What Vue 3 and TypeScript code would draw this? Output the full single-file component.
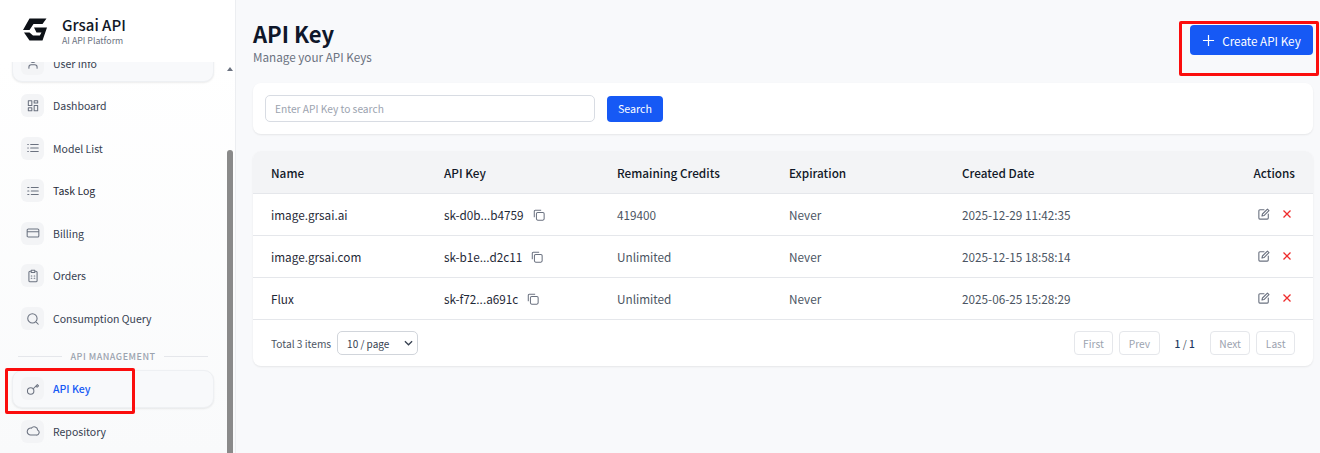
<template>
  <div class="page">
    <aside class="sidebar">
      <div class="brand">
        <svg class="logo" viewBox="0 0 24 23" width="24" height="23">
          <path d="M6.5 0.5H23.5L19.500 6H10.500L6.500 12H0Z" fill="#0d1117" />
          <path d="M11 9.500H24L19.500 22.500H6.500L1 14.500H6.500L10 17.500H16.800L18.500 14.500H13.500Z" fill="#0d1117" />
        </svg>
        <div>
          <div class="brand-name">Grsai API</div>
          <div class="brand-sub">AI API Platform</div>
        </div>
      </div>
      <div class="nav-wrap">
        <nav class="nav">
          <template v-for="item in navItems" :key="item.label">
            <div v-if="item.section" class="section"><span>{{ item.section }}</span></div>
            <div class="nav-item" :class="{ card: item.card, active: item.active, strong: item.strong }">
              <span class="nav-icon">
                <svg viewBox="0 0 24 24" width="14" height="14" fill="none" stroke="currentColor" stroke-width="1.8"
                  stroke-linecap="round" stroke-linejoin="round">
                  <path :d="item.icon" />
                </svg>
              </span>
              <span>{{ item.label }}</span>
            </div>
          </template>
        </nav>
        <div class="scrollbar">
          <span class="arrow"></span>
          <span class="thumb"></span>
        </div>
      </div>
    </aside>

    <main class="main">
      <header class="head">
        <div>
          <h1>API Key</h1>
          <p>Manage your API Keys</p>
        </div>
        <button class="create">
          <svg viewBox="0 0 14 14" width="13" height="13" fill="none" stroke="#fff" stroke-width="1.3">
            <path d="M7 1v12M1 7h12" />
          </svg>
          Create API Key
        </button>
      </header>

      <section class="search card-box">
        <input class="search-input" placeholder="Enter API Key to search" />
        <button class="search-btn">Search</button>
      </section>

      <section class="table-box card-box">
        <table>
          <colgroup>
            <col style="width: 173px" />
            <col style="width: 173px" />
            <col style="width: 172px" />
            <col style="width: 173px" />
            <col />
            <col style="width: 120px" />
          </colgroup>
          <thead>
            <tr>
              <th>Name</th>
              <th>API Key</th>
              <th>Remaining Credits</th>
              <th>Expiration</th>
              <th>Created Date</th>
              <th class="right">Actions</th>
            </tr>
          </thead>
          <tbody>
            <tr v-for="row in rows" :key="row.name">
              <td class="name">{{ row.name }}</td>
              <td class="name">
                <span class="key">
                  {{ row.key }}
                  <svg viewBox="0 0 14 14" width="12" height="12" fill="none" stroke="#6b7280" stroke-width="1.2">
                    <rect x="4" y="4" width="9" height="9" rx="1.5" />
                    <path d="M1.5 9.5V2.5a1 1 0 0 1 1-1h7" />
                  </svg>
                </span>
              </td>
              <td>{{ row.credits }}</td>
              <td>Never</td>
              <td>{{ row.created }}</td>
              <td>
                <div class="actions">
                  <svg viewBox="0 0 14 14" width="12" height="12" fill="none" stroke="#6b7280" stroke-width="1.3"
                    stroke-linecap="round" stroke-linejoin="round">
                    <path d="M7 2H2.2A1.2 1.2 0 0 0 1 3.2v8.6A1.2 1.2 0 0 0 2.2 13h8.6a1.2 1.2 0 0 0 1.2-1.2V7" />
                    <path d="M11 1.2l1.8 1.8L7 8.8l-2.4.6.6-2.4z" />
                  </svg>
                  <svg viewBox="0 0 10 10" width="10" height="10" fill="none" stroke="#ef2b2b" stroke-width="1.3">
                    <path d="M1.5 1.5l7 7M8.5 1.5l-7 7" />
                  </svg>
                </div>
              </td>
            </tr>
          </tbody>
        </table>
        <footer class="pager">
          <div class="total">
            <span>Total 3 items</span>
            <div class="size">
              <span>10 / page</span>
              <svg viewBox="0 0 10 6" width="9" height="6" fill="none" stroke="#374151" stroke-width="1.4">
                <path d="M1 1l4 4 4-4" />
              </svg>
            </div>
          </div>
          <div class="pages">
            <span class="pg">First</span>
            <span class="pg">Prev</span>
            <span class="cur"><b>1</b> / <b>1</b></span>
            <span class="pg">Next</span>
            <span class="pg">Last</span>
          </div>
        </footer>
      </section>
    </main>

    <div class="mark mark-nav"></div>
    <div class="mark mark-create"></div>
  </div>
</template>

<script setup lang="ts">
interface NavItem {
  label: string;
  icon: string;
  card?: boolean;
  active?: boolean;
  strong?: boolean;
  section?: string;
}

const navItems: NavItem[] = [
  { label: 'User Info', card: true, icon: 'M19 21v-2a4 4 0 0 0-4-4H9a4 4 0 0 0-4 4v2M12 11a4 4 0 1 0 0-8 4 4 0 0 0 0 8z' },
  { label: 'Dashboard', icon: 'M4 3h6v8H4zM14 3h6v4h-6zM14 11h6v9h-6zM4 15h6v5H4z' },
  { label: 'Model List', icon: 'M8 6h13M8 12h13M8 18h13M3 6h1M3 12h1M3 18h1' },
  { label: 'Task Log', strong: true, icon: 'M9 6h12M9 12h12M9 18h12M3 6h2M3 12h2M3 18h2' },
  { label: 'Billing', icon: 'M4 5h16a2 2 0 0 1 2 2v10a2 2 0 0 1-2 2H4a2 2 0 0 1-2-2V7a2 2 0 0 1 2-2zM2 10h20' },
  { label: 'Orders', icon: 'M9 4H7a2 2 0 0 0-2 2v14a2 2 0 0 0 2 2h10a2 2 0 0 0 2-2V6a2 2 0 0 0-2-2h-2M9 2h6v4H9zM9 12h1M14 12h1M9 16h1M14 16h1' },
  { label: 'Consumption Query', icon: 'M11 19a8 8 0 1 0 0-16 8 8 0 0 0 0 16zM21 21l-4.3-4.3' },
  { label: 'API Key', card: true, active: true, section: 'API MANAGEMENT', icon: 'M8 21a5.5 5.5 0 1 0 0-11 5.5 5.5 0 0 0 0 11zM12 12l5-5M17 7l2.5-2.5 2 2-2.5 2.500z' },
  { label: 'Repository', icon: 'M17.5 19H8a6 6 0 1 1 1.2-11.9A6 6 0 0 1 20 10.5 4.5 4.5 0 0 1 17.5 19z' },
];

const rows = [
  { name: 'image.grsai.ai', key: 'sk-d0b...b4759', credits: '419400', created: '2025-12-29 11:42:35' },
  { name: 'image.grsai.com', key: 'sk-b1e...d2c11', credits: 'Unlimited', created: '2025-12-15 18:58:14' },
  { name: 'Flux', key: 'sk-f72...a691c', credits: 'Unlimited', created: '2025-06-25 15:28:29' },
];
</script>

<style>
html,
body {
  margin: 0;
  height: 100%;
  overflow: hidden;
}
</style>

<style scoped>
.page {
  position: relative;
  display: flex;
  width: 1320px;
  height: 453px;
  overflow: hidden;
  background: #f8f9fb;
  font-family: "Noto Sans CJK SC", "Noto Sans", sans-serif;
  color: #111827;
}

/* sidebar */
.sidebar {
  width: 236px;
  flex: none;
  display: flex;
  flex-direction: column;
  background: #fff;
  border-right: 1px solid #eceef1;
  box-sizing: border-box;
}

.brand {
  height: 62px;
  flex: none;
  display: flex;
  align-items: center;
  gap: 15px;
  padding-left: 23px;
  background: #fff;
}

.logo {
  margin-bottom: 3px;
}

.brand-name {
  font-size: 15px;
  line-height: 18px;
  font-weight: 500;
  color: #111827;
  margin-top: 2px;
}

.brand-sub {
  font-size: 8.8px;
  line-height: 14px;
  color: #6b7280;
}

.nav-wrap {
  flex: 1;
  display: flex;
  min-height: 0;
  overflow: hidden;
  background: linear-gradient(#fff, #f9fafb);
}

.nav {
  flex: 1;
  margin-top: -18px;
  padding: 0 12px;
  min-width: 0;
}

.nav-item {
  height: 38px;
  margin-bottom: 4.6px;
  display: flex;
  align-items: center;
  gap: 9px;
  padding-left: 8px;
  font-size: 10.5px;
  color: #374151;
  border-radius: 10px;
  box-sizing: border-box;
  border: 1px solid transparent;
}

.nav-item.strong {
  color: #1f2937;
}

.nav-item.card {
  background: #f8f9fb;
  border-color: #eef0f3;
  box-shadow: 0 1px 2px rgba(0, 0, 0, 0.08);
}

.nav-item.active {
  color: #1659f5;
  font-weight: 500;
}

.nav-icon {
  width: 23px;
  height: 23px;
  flex: none;
  display: flex;
  align-items: center;
  justify-content: center;
  border-radius: 6px;
  background: #f3f4f6;
  color: #6b7280;
}

.section {
  height: 20px;
  margin: 9px 6px 3px 6px;
  display: flex;
  align-items: center;
  gap: 8px;
  font-size: 9px;
  font-weight: 500;
  letter-spacing: 0.5px;
  color: #9ca3af;
}

.section::before,
.section::after {
  content: "";
  flex: 1;
  height: 1px;
  background: #e5e7eb;
}

.scrollbar {
  width: 9px;
  flex: none;
}

.arrow {
  display: block;
  width: 0;
  margin: 5px 0 0 1px;
  border: 3px solid transparent;
  border-top: 0;
  border-bottom: 4px solid #6b7280;
}

.thumb {
  display: block;
  margin: 79px 0 0 1px;
  width: 6px;
  height: 320px;
  border-radius: 3px;
  background: #8a8a8a;
}

/* main */
.main {
  flex: 1;
  min-width: 0;
  padding: 0 7px 0 17px;
}

.head {
  height: 83px;
  display: flex;
  justify-content: space-between;
  align-items: flex-start;
}

h1 {
  margin: 17px 0 0;
  font-size: 22px;
  line-height: 32px;
  font-weight: 700;
  color: #0f172a;
}

.head p {
  margin: -1px 0 0;
  font-size: 11.7px;
  line-height: 18px;
  color: #6b7280;
}

.create {
  margin-top: 25px;
  width: 123px;
  height: 30px;
  display: flex;
  align-items: center;
  justify-content: center;
  gap: 7px;
  border: none;
  border-radius: 4px;
  background: #1659f5;
  color: #fff;
  font: inherit;
  font-size: 11.7px;
}

.card-box {
  background: #fff;
  border-radius: 8px;
  box-shadow: 0 1px 2px rgba(0, 0, 0, 0.08);
}

.search {
  height: 51px;
  display: flex;
  align-items: center;
  gap: 12px;
  padding-left: 12px;
}

.search-input {
  width: 330px;
  height: 27px;
  box-sizing: border-box;
  padding: 0 9px;
  border: 1px solid #d8dce3;
  border-radius: 5px;
  font: inherit;
  font-size: 10.2px;
  outline: none;
}

.search-input::placeholder {
  color: #9ca3af;
}

.search-btn {
  width: 56px;
  height: 26px;
  padding: 0;
  border: none;
  border-radius: 4px;
  background: #1659f5;
  color: #fff;
  font: inherit;
  font-size: 10.7px;
}

.table-box {
  margin-top: 17px;
  overflow: hidden;
}

table {
  width: 100%;
  table-layout: fixed;
  border-collapse: collapse;
  font-size: 11.75px;
}

th {
  height: 42px;
  padding: 0 18px;
  text-align: left;
  font-weight: 500;
  color: #111827;
  background: #f3f4f6;
}

td {
  height: 41px;
  padding: 0 18px;
  color: #4b5563;
  border-top: 1px solid #e5e7eb;
}

td.name {
  color: #1f2937;
}

tbody tr:last-child td {
  border-bottom: 1px solid #e5e7eb;
}

.right {
  text-align: right;
}

.key {
  display: inline-flex;
  align-items: center;
  gap: 9px;
}

.actions {
  display: flex;
  justify-content: flex-end;
  align-items: center;
  gap: 12px;
  padding-right: 3px;
  margin-top: -1px;
}

.pager {
  height: 46px;
  display: flex;
  justify-content: space-between;
  align-items: center;
  padding: 0 18px;
  font-size: 10.2px;
}

.total {
  display: flex;
  align-items: center;
  gap: 6px;
  color: #4b5563;
}

.size {
  width: 81px;
  height: 24px;
  box-sizing: border-box;
  display: flex;
  align-items: center;
  justify-content: space-between;
  padding: 0 4px 0 9px;
  border: 1px solid #d1d5db;
  border-radius: 5px;
  color: #374151;
  font-size: 10px;
}

.pages {
  display: flex;
  align-items: center;
  gap: 6px;
}

.pg {
  height: 22px;
  padding: 0 8.5px;
  display: flex;
  align-items: center;
  border: 1px solid #e5e7eb;
  border-radius: 4px;
  color: #9ca3af;
}

.cur {
  padding: 0 9px;
  color: #4b5563;
}

.cur b {
  font-weight: 500;
  color: #1e3a5f;
}

/* red annotations drawn on the screenshot */
.mark {
  position: absolute;
  box-sizing: border-box;
  border: 3px solid #fb0d0d;
  border-radius: 2px;
}

.mark-nav {
  left: 5px;
  top: 368px;
  width: 130px;
  height: 46px;
}

.mark-create {
  left: 1179px;
  top: 21px;
  width: 140px;
  height: 55px;
}
</style>
